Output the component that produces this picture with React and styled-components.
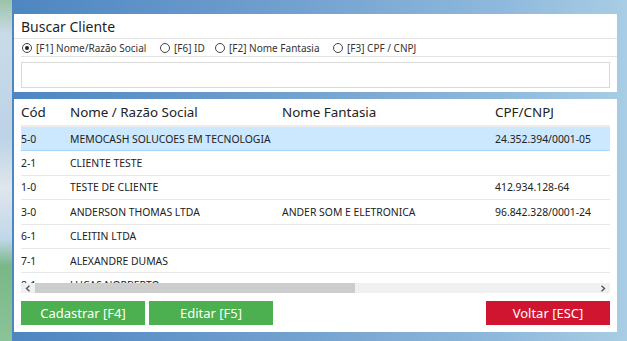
import React from "react";
import styled, { createGlobalStyle } from "styled-components";

const Global = createGlobalStyle`
  html, body { margin: 0; padding: 0; }
  body {
    width: 627px; height: 341px; overflow: hidden;
    font-family: "Noto Sans", "Open Sans", sans-serif;
  }
`;

const Desktop = styled.div`
  width: 627px; height: 341px; display: flex;
  background: linear-gradient(90deg, #4c85c1 0%, #6d9ccd 40%, #8fb9dc 80%, #a8cde4 100%);
`;

const Strip = styled.div`
  width: 12px; flex: none;
  background: linear-gradient(180deg, #9cc3a8 0%, #c9dbe8 10%, #bcd3e6 40%, #dfe6ec 55%, #c0d8ea 70%, #79b787 78%, #8cc39a 100%);
`;

const Window = styled.div`
  flex: 1; display: flex; flex-direction: column; gap: 7px;
  padding: 14px 10px 8px 2px;
`;

const Panel = styled.div`
  background: #fff; display: flex; flex-direction: column;
  padding: ${p => p.$pad};
`;

const Title = styled.div`
  font-size: 14px; color: #1e1e1e; height: 24px; line-height: 26px;
  padding-left: 7px; border-bottom: 1px solid #e3e3e3;
`;

const RadioRow = styled.div`
  display: flex; align-items: center; height: 17px;
  border-bottom: 1px solid #e3e3e3; margin-left: 7px; padding-left: 1px;
`;

const RadioOpt = styled.label`
  display: flex; align-items: center; gap: 4px;
  width: ${p => p.$w ? p.$w + "px" : "auto"}; flex: none;
  font-size: 10px; color: #333; white-space: nowrap;
`;

const Circle = styled.span`
  width: 8px; height: 8px; border-radius: 50%; border: 1px solid #444;
  display: flex; align-items: center; justify-content: center; box-sizing: content-box;
  &::after {
    content: ""; width: 4px; height: 4px; border-radius: 50%;
    background: ${p => p.$on ? "#222" : "transparent"};
  }
`;

const Input = styled.div`
  margin: 5px 7px 4px 7px; height: 24px; border: 1px solid #d9d9d9; background: #fff;
`;

const Grid = styled.div`
  height: 184px; overflow: hidden; display: flex; flex-direction: column;
`;

const HeadRow = styled.div`
  display: grid; grid-template-columns: 49px 212px 213px 1fr;
  height: 26px; align-items: center; border-bottom: 2px solid #ececec;
  font-size: 13.4px; color: #222; flex: none;
`;

const Row = styled.div`
  display: grid; grid-template-columns: 49px 212px 213px 1fr;
  height: 23.4px; flex: none; align-items: center;
  border-bottom: 1px solid ${p => p.$sel ? "#a8d6fb" : "#e8e8e8"};
  background: ${p => p.$sel ? "#cce8ff" : "#fff"};
  font-size: 10.4px; color: #222; white-space: nowrap;
`;

const Cell = styled.div`
  overflow: hidden;
`;

const HScroll = styled.div`
  height: 10px; background: #f0f0f0; display: flex; align-items: center; flex: none;
`;

const ArrowBox = styled.span`
  width: 14px; height: 10px; flex: none; display: flex; justify-content: center; align-items: center;
`;

const Track = styled.div`
  flex: 1; height: 10px; display: flex;
`;

const Thumb = styled.div`
  height: 10px; background: #cdcdcd;
`;

const Buttons = styled.div`
  display: flex; gap: 4px; margin-top: 8px; height: 24px;
`;

const Btn = styled.button`
  width: 124px; height: 24px; border: none; margin: 0; padding: 0;
  background: ${p => p.$red ? "#d01531" : "#4caf50"};
  color: #fff; font-family: "Noto Sans", "Open Sans", sans-serif; font-size: 13px;
  margin-left: ${p => p.$push ? "auto" : "0"};
`;

const Chevron = ({ dir }) => (
  <svg width="6" height="7" viewBox="0 0 6 7">
    <path d={dir === "left" ? "M4.5 0.8 L1.5 3.5 L4.5 6.2" : "M1.5 0.8 L4.5 3.5 L1.5 6.2"}
      fill="none" stroke="#555" strokeWidth="1.4" />
  </svg>
);

const rows = [
  ["5-0", "MEMOCASH SOLUCOES EM TECNOLOGIA", "", "24.352.394/0001-05", true],
  ["2-1", "CLIENTE TESTE", "", ""],
  ["1-0", "TESTE DE CLIENTE", "", "412.934.128-64"],
  ["3-0", "ANDERSON THOMAS LTDA", "ANDER SOM E ELETRONICA", "96.842.328/0001-24"],
  ["6-1", "CLEITIN LTDA", "", ""],
  ["7-1", "ALEXANDRE DUMAS", "", ""],
  ["8-1", "LUCAS NORBERTO", "", ""],
];

export default function App() {
  return (
    <>
      <Global />
      <Desktop>
        <Strip />
        <Window>
          <Panel $pad="0">
            <Title>Buscar Cliente</Title>
            <RadioRow>
              <RadioOpt $w={138}><Circle $on />[F1] Nome/Razão Social</RadioOpt>
              <RadioOpt $w={55}><Circle />[F6] ID</RadioOpt>
              <RadioOpt $w={118}><Circle />[F2] Nome Fantasia</RadioOpt>
              <RadioOpt><Circle />[F3] CPF / CNPJ</RadioOpt>
            </RadioRow>
            <Input />
          </Panel>
          <Panel $pad="0 7px 7px 7px">
            <Grid>
              <HeadRow>
                <Cell>Cód</Cell>
                <Cell>Nome / Razão Social</Cell>
                <Cell>Nome Fantasia</Cell>
                <Cell>CPF/CNPJ</Cell>
              </HeadRow>
              {rows.map(r => (
                <Row key={r[0]} $sel={r[4]}>
                  <Cell>{r[0]}</Cell>
                  <Cell>{r[1]}</Cell>
                  <Cell>{r[2]}</Cell>
                  <Cell>{r[3]}</Cell>
                </Row>
              ))}
            </Grid>
            <HScroll>
              <ArrowBox><Chevron dir="left" /></ArrowBox>
              <Track><Thumb style={{ width: "57%" }} /></Track>
              <ArrowBox><Chevron dir="right" /></ArrowBox>
            </HScroll>
            <Buttons>
              <Btn>Cadastrar [F4]</Btn>
              <Btn>Editar [F5]</Btn>
              <Btn $red $push>Voltar [ESC]</Btn>
            </Buttons>
          </Panel>
        </Window>
      </Desktop>
    </>
  );
}
